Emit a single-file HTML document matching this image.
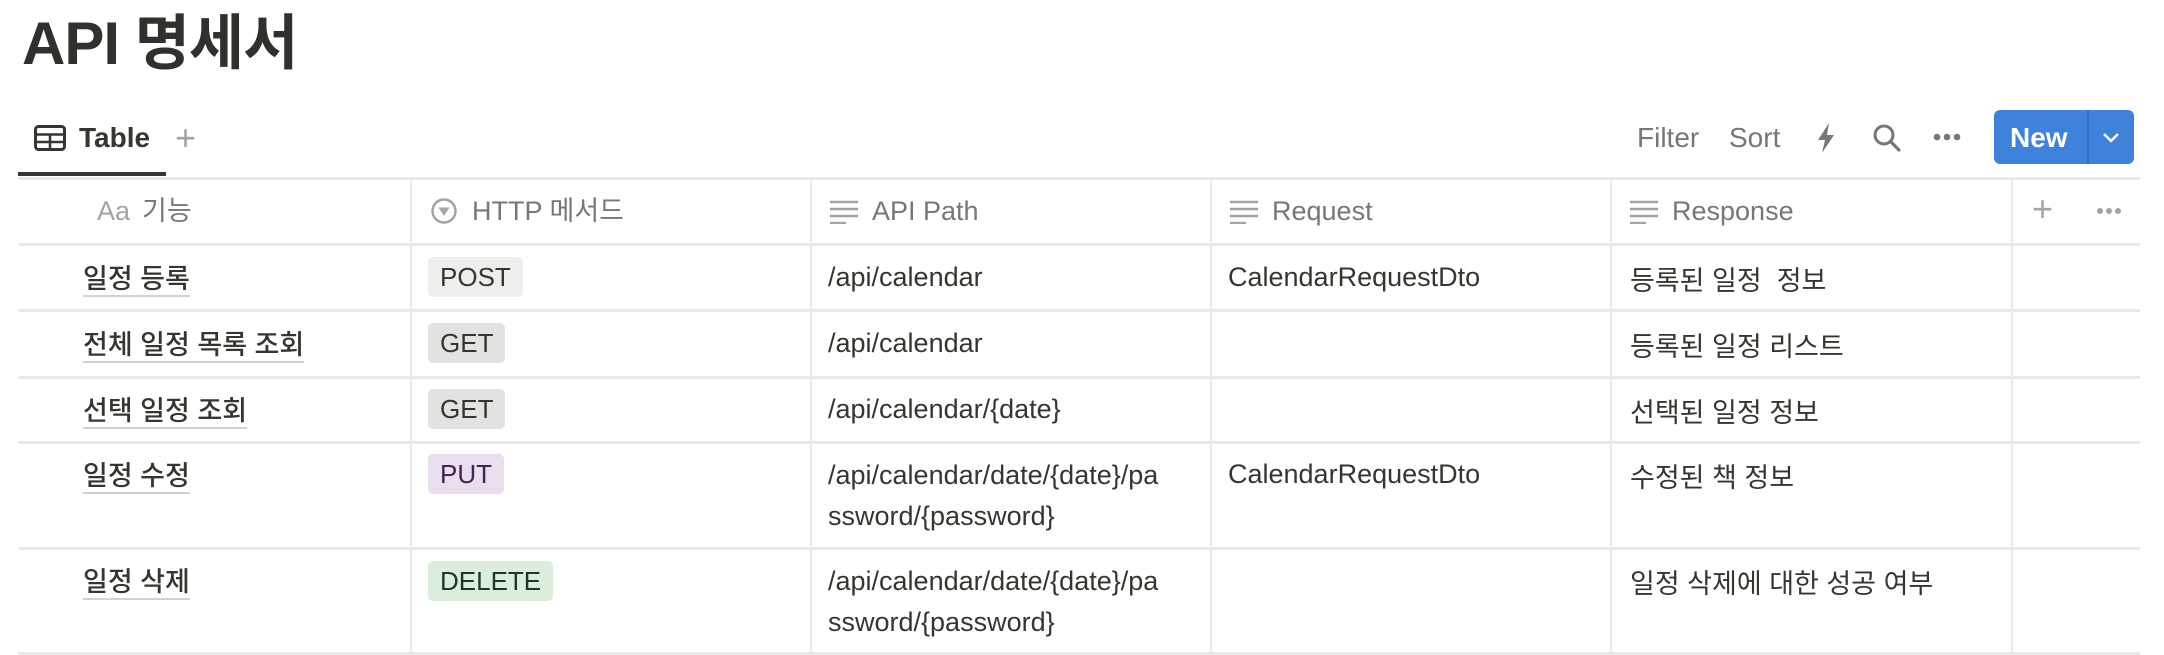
<!DOCTYPE html>
<html><head><meta charset="utf-8"><style>
*{margin:0;padding:0;box-sizing:border-box}
body{width:2164px;height:654px;background:#fff;position:relative;overflow:hidden;font-family:"Liberation Sans","Noto Sans CJK KR",sans-serif;color:#37352f}
.a{position:absolute;white-space:nowrap}
.h{position:absolute;height:3px;background:#e9e9e7;left:18px;width:2122px}
.v{position:absolute;width:2px;background:#e9e9e7;top:178px;height:476px}
.hd{font-size:27px;color:#787774;top:196px}
.hk{top:189px}
.c{font-size:27px;color:#37352f}
.nm{font-weight:500;border-bottom:2px solid #d3d2cf;line-height:32px}
.tag{position:absolute;font-size:26px;padding:0 12px;height:40px;line-height:40px;border-radius:5px}
</style></head><body>
<div class="a" style="left:22px;top:4px;font-size:60px;font-weight:700;line-height:80px;color:#32302c;letter-spacing:-1px">API 명세서</div>

<svg class="a" style="left:34px;top:125px" width="32" height="26" viewBox="0 0 32 26"><rect x="1.5" y="1.5" width="29" height="23" rx="3" fill="none" stroke="#37352f" stroke-width="3"/><line x1="1.5" y1="9.5" x2="30.5" y2="9.5" stroke="#37352f" stroke-width="2.5"/><line x1="1.5" y1="17" x2="30.5" y2="17" stroke="#37352f" stroke-width="2.5"/><line x1="16" y1="9" x2="16" y2="25" stroke="#37352f" stroke-width="2.5"/></svg>
<div class="a" style="left:79px;top:122px;font-size:28px;font-weight:600">Table</div>
<div class="a" style="left:175px;top:117px;font-size:36px;color:#a5a4a1;font-weight:300">+</div>
<div class="a" style="left:18px;top:172px;width:148px;height:4px;background:#37352f"></div>

<div class="a" style="left:1637px;top:122px;font-size:28px;color:#787774">Filter</div>
<div class="a" style="left:1729px;top:122px;font-size:28px;color:#787774">Sort</div>
<svg class="a" style="left:1815px;top:122px" width="22" height="32" viewBox="0 0 22 32"><path d="M14 1 L3 18 H10 L7 31 L19 13 H12 Z" fill="#787774"/></svg>
<svg class="a" style="left:1872px;top:123px" width="30" height="30" viewBox="0 0 30 30"><circle cx="12" cy="12" r="9" fill="none" stroke="#787774" stroke-width="3"/><line x1="18.5" y1="18.5" x2="27" y2="27" stroke="#787774" stroke-width="3.2" stroke-linecap="round"/></svg>
<svg class="a" style="left:1933px;top:133px" width="28" height="8"><circle cx="4" cy="4" r="3.3" fill="#787774"/><circle cx="14" cy="4" r="3.3" fill="#787774"/><circle cx="24" cy="4" r="3.3" fill="#787774"/></svg>
<div class="a" style="left:1994px;top:110px;width:140px;height:54px;background:#3e82db;border-radius:6px"></div>
<div class="a" style="left:2087px;top:110px;width:2px;height:54px;background:#2f6dbf"></div>
<div class="a" style="left:2010px;top:122px;font-size:28px;font-weight:700;color:#fff">New</div>
<svg class="a" style="left:2102px;top:132px" width="18" height="12"><path d="M2 2 L9 9 L16 2" fill="none" stroke="#fff" stroke-width="2.5"/></svg>

<div class="h" style="top:177px"></div>
<div class="h" style="top:243px"></div>
<div class="h" style="top:309px"></div>
<div class="h" style="top:376px"></div>
<div class="h" style="top:441px"></div>
<div class="h" style="top:547px"></div>
<div class="h" style="top:652px"></div>
<div class="v" style="left:410px"></div>
<div class="v" style="left:810px"></div>
<div class="v" style="left:1210px"></div>
<div class="v" style="left:1610px"></div>
<div class="v" style="left:2011px"></div>

<div class="a hd" style="left:97px;color:#a5a4a1">Aa</div>
<div class="a hd hk" style="left:142px">기능</div>
<svg class="a" style="left:430px;top:197px" width="28" height="28"><circle cx="14" cy="14" r="11.5" fill="none" stroke="#a5a4a1" stroke-width="2.5"/><path d="M8.5 10.5 H19.5 L14 19 Z" fill="#a5a4a1"/></svg>
<div class="a hd hk" style="left:472px">HTTP 메서드</div>
<svg class="a" style="left:830px;top:200px" width="30" height="24"><g stroke="#a5a4a1" stroke-width="2.4"><line x1="0" y1="2" x2="28" y2="2"/><line x1="0" y1="9" x2="28" y2="9"/><line x1="0" y1="16" x2="28" y2="16"/><line x1="0" y1="23" x2="16" y2="23"/></g></svg>
<div class="a hd" style="left:872px">API Path</div>
<svg class="a" style="left:1230px;top:200px" width="30" height="24"><g stroke="#a5a4a1" stroke-width="2.4"><line x1="0" y1="2" x2="28" y2="2"/><line x1="0" y1="9" x2="28" y2="9"/><line x1="0" y1="16" x2="28" y2="16"/><line x1="0" y1="23" x2="16" y2="23"/></g></svg>
<div class="a hd" style="left:1272px">Request</div>
<svg class="a" style="left:1630px;top:200px" width="30" height="24"><g stroke="#a5a4a1" stroke-width="2.4"><line x1="0" y1="2" x2="28" y2="2"/><line x1="0" y1="9" x2="28" y2="9"/><line x1="0" y1="16" x2="28" y2="16"/><line x1="0" y1="23" x2="16" y2="23"/></g></svg>
<div class="a hd" style="left:1672px">Response</div>
<div class="a" style="left:2032px;top:188px;font-size:36px;color:#a5a4a1;font-weight:300">+</div>
<svg class="a" style="left:2096px;top:207px" width="26" height="8"><circle cx="4" cy="4" r="3" fill="#a5a4a1"/><circle cx="13" cy="4" r="3" fill="#a5a4a1"/><circle cx="22" cy="4" r="3" fill="#a5a4a1"/></svg>

<!-- row 1 -->
<div class="a c nm" style="left:83px;top:263px">일정 등록</div>
<div class="tag" style="left:428px;top:257px;background:#efeeec">POST</div>
<div class="a c" style="left:828px;top:262px">/api/calendar</div>
<div class="a c" style="left:1228px;top:262px">CalendarRequestDto</div>
<div class="a c" style="left:1630px;top:259px">등록된 일정&nbsp; 정보</div>
<!-- row 2 -->
<div class="a c nm" style="left:83px;top:329px">전체 일정 목록 조회</div>
<div class="tag" style="left:428px;top:323px;background:#e3e2e0">GET</div>
<div class="a c" style="left:828px;top:328px">/api/calendar</div>
<div class="a c" style="left:1630px;top:325px">등록된 일정 리스트</div>
<!-- row 3 -->
<div class="a c nm" style="left:83px;top:395px">선택 일정 조회</div>
<div class="tag" style="left:428px;top:389px;background:#e3e2e0">GET</div>
<div class="a c" style="left:828px;top:394px">/api/calendar/{date}</div>
<div class="a c" style="left:1630px;top:391px">선택된 일정 정보</div>
<!-- row 4 -->
<div class="a c nm" style="left:83px;top:460px">일정 수정</div>
<div class="tag" style="left:428px;top:454px;background:#e8deee;color:#412454">PUT</div>
<div class="a c" style="left:828px;top:455px;line-height:41px">/api/calendar/date/{date}/pa<br>ssword/{password}</div>
<div class="a c" style="left:1228px;top:459px">CalendarRequestDto</div>
<div class="a c" style="left:1630px;top:456px">수정된 책 정보</div>
<!-- row 5 -->
<div class="a c nm" style="left:83px;top:566px">일정 삭제</div>
<div class="tag" style="left:428px;top:561px;background:#dbeddb;color:#1c3829">DELETE</div>
<div class="a c" style="left:828px;top:561px;line-height:41px">/api/calendar/date/{date}/pa<br>ssword/{password}</div>
<div class="a c" style="left:1630px;top:562px">일정 삭제에 대한 성공 여부</div>
</body></html>
